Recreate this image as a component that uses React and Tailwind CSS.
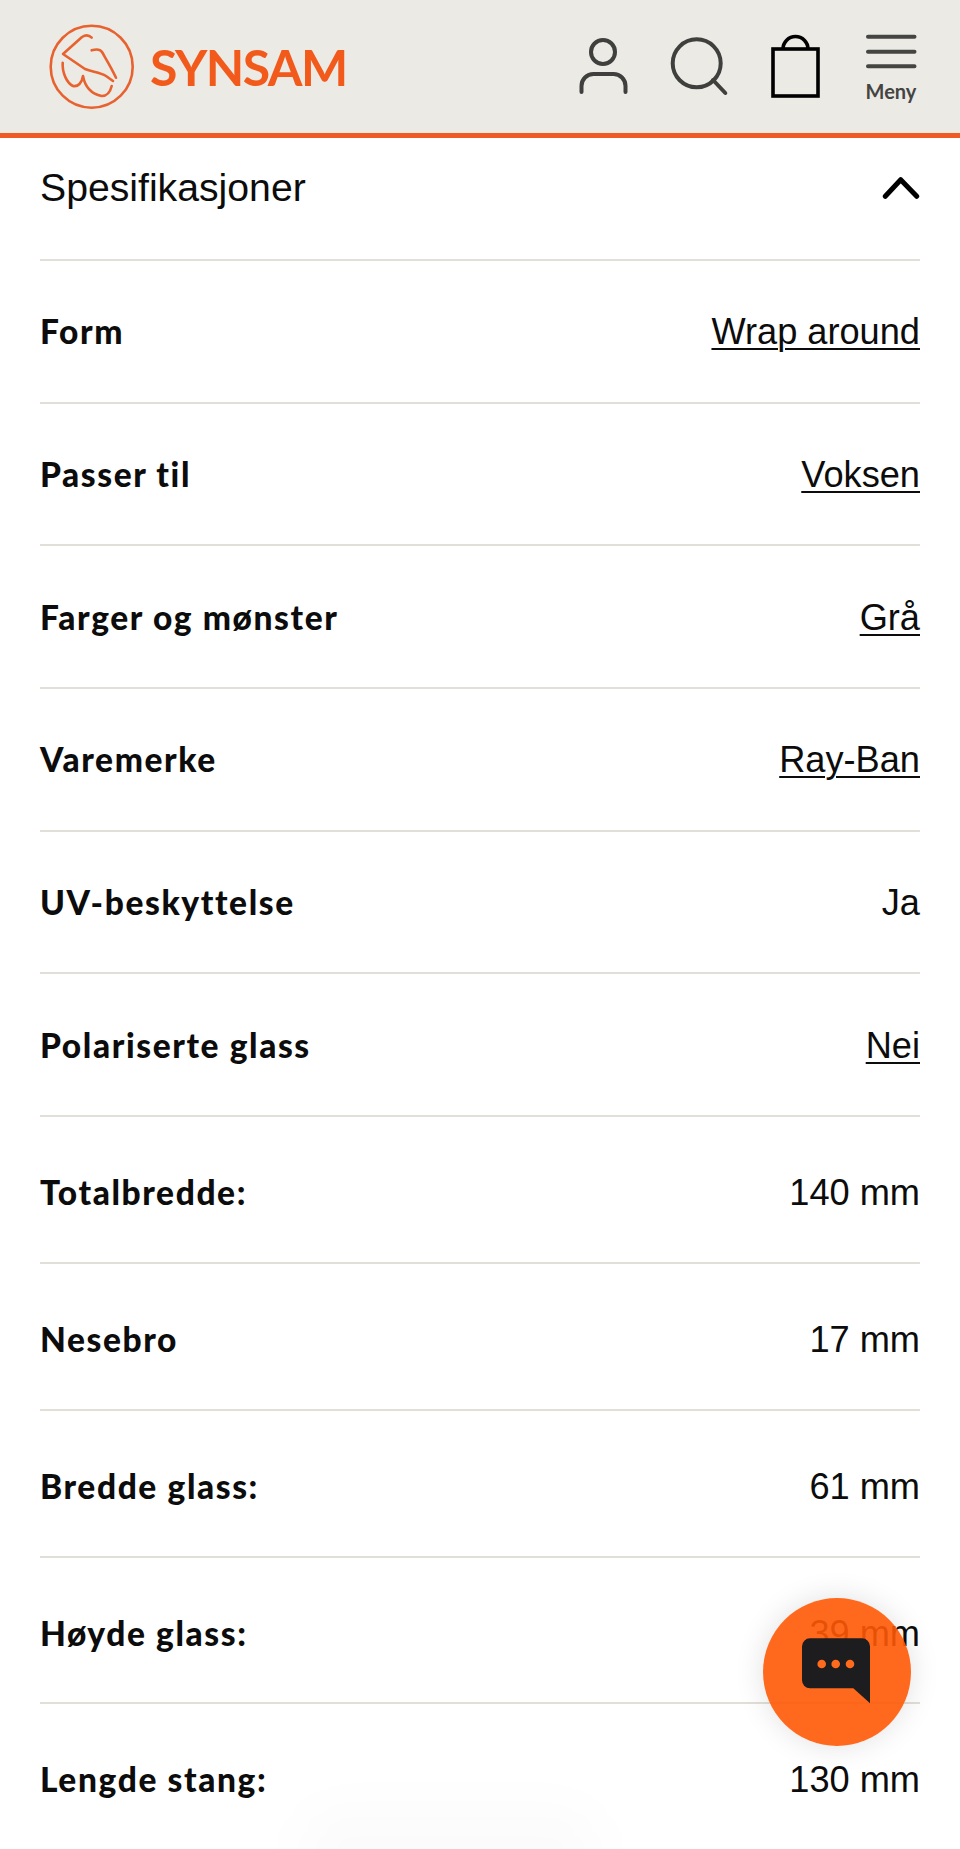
const specs = [
  { label: 'Form', value: 'Wrap around', link: true },
  { label: 'Passer til', value: 'Voksen', link: true },
  { label: 'Farger og mønster', value: 'Grå', link: true },
  { label: 'Varemerke', value: 'Ray-Ban', link: true },
  { label: 'UV-beskyttelse', value: 'Ja' },
  { label: 'Polariserte glass', value: 'Nei', link: true },
  { label: 'Totalbredde:', value: '140 mm', tall: true },
  { label: 'Nesebro', value: '17 mm', tall: true },
  { label: 'Bredde glass:', value: '61 mm', tall: true },
  { label: 'Høyde glass:', value: '39 mm', tall: true },
  { label: 'Lengde stang:', value: '130 mm', tall: true, last: true },
];

const Logo = () => (
  <div className="flex items-center">
    <svg width="100" height="100" viewBox="42 16 100 100" fill="none" stroke="#e8622f" strokeWidth="2.6" strokeLinecap="round" strokeLinejoin="round">
      <circle cx="91.7" cy="65.7" r="41" />
      <path d="M91.7 36.7C88 33 85 34 82 36L63 53L85 68C92 71 100 71 106 75L113 80" />
      <path d="M91.7 49.3C96 48 100 48 102 51C106 58 111 66 116 76.7" />
      <path d="M62.7 61.7C62 72 67 82 73 85C78 86 82 82 83 75C85 86 92 93 101.7 95C106 95 110 92 111.7 85" />
    </svg>
    <span className="ml-[8px] font-['Lato'] font-bold text-[50px] leading-none tracking-[-1.6px] text-[#f25a1c]">SYNSAM</span>
  </div>
);

const Icons = () => (
  <div className="ml-auto flex items-start pt-[30px] pr-[42px] gap-[38px]">
    <svg width="54" height="70" viewBox="576 30 54 70" fill="none" stroke="#3f3f3d" strokeWidth="4" strokeLinecap="round">
      <circle cx="603" cy="52" r="12" />
      <path d="M581.5 92v-6a12 12 0 0 1 12-12h20a12 12 0 0 1 12 12v6" />
    </svg>
    <svg width="62" height="70" viewBox="668 30 62 70" fill="none" stroke="#3f3f3d" strokeWidth="4" strokeLinecap="round">
      <circle cx="696.7" cy="63.3" r="24" />
      <path d="M713 80l12.3 13" />
    </svg>
    <svg width="54" height="70" viewBox="768 30 54 70" fill="none" stroke="#000" strokeWidth="3.6">
      <rect x="773" y="49" width="45" height="47" />
      <path d="M783 49a12.5 12.5 0 0 1 25 0" />
    </svg>
    <div className="ml-[4px] flex w-[54px] flex-col items-center">
      <svg width="54" height="44" viewBox="864 30 54 44" fill="none" stroke="#444442" strokeWidth="4" strokeLinecap="round">
        <path d="M868 36.7h46.5M868 51.7h46.5M868 66.3h46.5" />
      </svg>
      <span className="mt-[7px] font-['Lato'] font-bold text-[20px] leading-[20px] text-[#444442]">Meny</span>
    </div>
  </div>
);

const SpecRow = ({ label, value, link, tall, last }) => (
  <div className={`flex items-center justify-between ${tall ? 'h-[146.8px]' : 'h-[142.7px] pt-[2px]'} ${tall && !last ? 'pt-[8px]' : ''} ${last ? 'pt-[5px]' : 'border-b-2 border-[#e2dfd9]'}`}>
    <span className="pb-[2px] font-['Lato'] font-black text-[33.5px] tracking-[1.6px] text-[#0c0c0c]">{label}</span>
    <span className={`font-['Liberation_Sans'] text-[36.2px] text-[#0c0c0c] ${link ? 'underline underline-offset-4 decoration-2' : ''}`}>{value}</span>
  </div>
);

export default function App() {
  return (
    <div className="relative h-[1849px] w-[960px] overflow-hidden bg-white">
      <header className="flex h-[138px] border-b-[5px] border-[#f05a24] bg-[#eceae5] pl-[42px]">
        <div className="flex h-[133px] items-center"><Logo /></div>
        <Icons />
      </header>

      <main className="px-[40px]">
        <div className="flex h-[123px] items-center justify-between border-b-2 border-[#e2dfd9] pb-[21px]">
          <h2 className="font-['Liberation_Sans'] text-[39.2px] text-[#0c0c0c]">Spesifikasjoner</h2>
          <svg width="38" height="24" viewBox="882 178 38 24" fill="none" stroke="#000" strokeWidth="5" strokeLinecap="round" strokeLinejoin="round">
            <path d="M885.3 198.3l15.4-16.6 16 16.6" />
          </svg>
        </div>
        {specs.map((spec) => (
          <SpecRow key={spec.label} {...spec} />
        ))}
      </main>

      {/* faint shadow at the bottom edge */}
      <div className="absolute bottom-[-40px] left-[300px] h-[80px] w-[300px] rounded-full bg-black/[0.015] blur-xl" />

      <button className="absolute left-[763px] top-[1598px] flex h-[148px] w-[148px] items-center justify-center rounded-full bg-[#ff5905]/90 shadow-[0_0_30px_rgba(0,0,0,0.12)]">
        <svg width="72" height="70" viewBox="801 1637 72 70">
          <path d="M810 1638.3h52a8 8 0 0 1 8 8v57l-16.7-15H810a8 8 0 0 1-8-8v-34a8 8 0 0 1 8-8z" fill="#1d1d1f" />
          <circle cx="821.7" cy="1664" r="4.3" fill="#ff6a1c" />
          <circle cx="835.7" cy="1664" r="4.3" fill="#ff6a1c" />
          <circle cx="850" cy="1664" r="4.3" fill="#ff6a1c" />
        </svg>
      </button>
    </div>
  );
}
